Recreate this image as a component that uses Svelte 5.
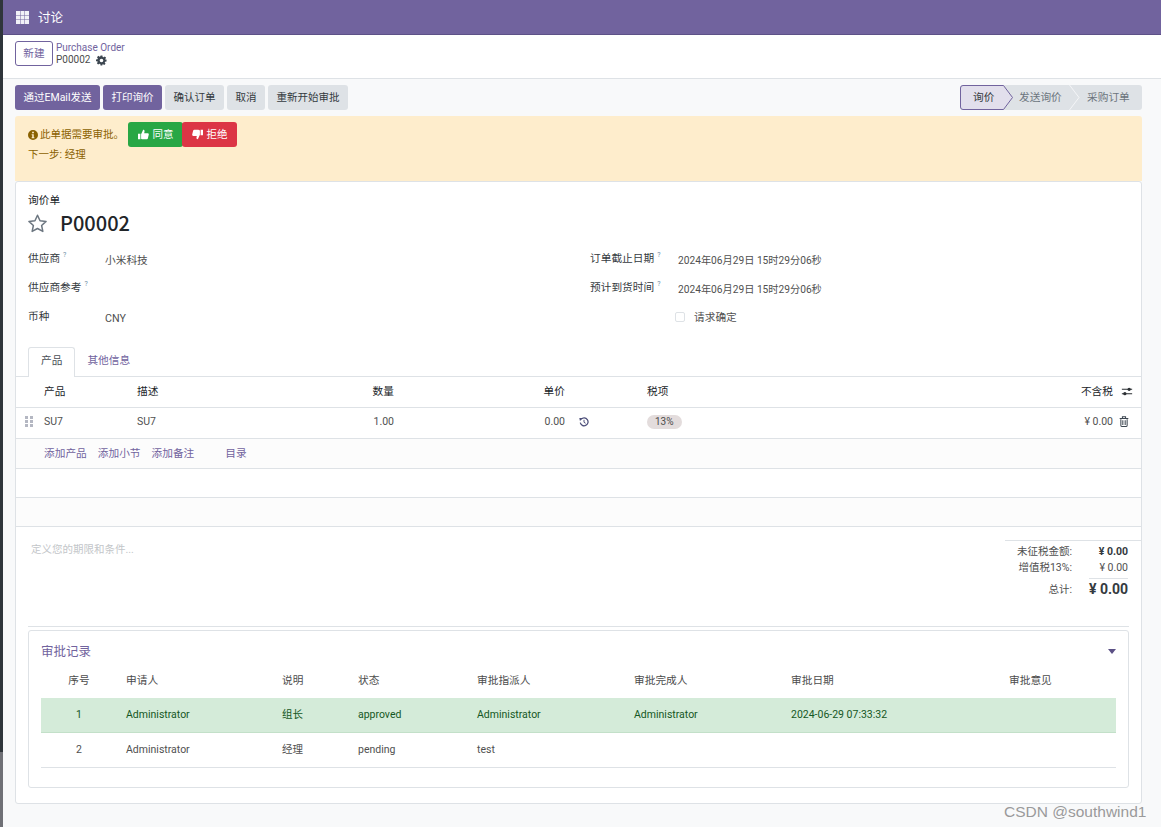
<script>
  const fieldsLeft = [
    { label: '供应商', help: true, value: '小米科技' },
    { label: '供应商参考', help: true, value: '' },
    { label: '币种', help: false, value: 'CNY' }
  ];
  const approvalHead = ['序号', '申请人', '说明', '状态', '审批指派人', '审批完成人', '审批日期', '审批意见'];
  const approvalRows = [
    { cls: 'ok', cells: ['1', 'Administrator', '组长', 'approved', 'Administrator', 'Administrator', '2024-06-29 07:33:32', ''] },
    { cls: '', cells: ['2', 'Administrator', '经理', 'pending', 'test', '', '', ''] }
  ];
</script>

<div class="page">
  <div class="strip"><div class="strip-dark"></div><div class="strip-grey"></div></div>
  <div class="main">
    <header class="nav">
      <svg class="apps" viewBox="0 0 13 13" width="13" height="13"><path fill="#f1f1f8" d="M0 0h4v4H0zM4.500 0h4v4h-4zM9 0h4v4H9zM0 4.500h4v4H0zM4.500 4.500h4v4h-4zM9 4.500h4v4H9zM0 9h4v4H0zM4.500 9h4v4h-4zM9 9h4v4H9z"/></svg>
      <span class="nav-title">讨论</span>
    </header>

    <section class="control">
      <button class="new">新建</button>
      <div class="crumb">
        <div class="crumb-top">Purchase Order</div>
        <div class="crumb-sub"><span>P00002</span>
          <svg viewBox="0 0 24 24" width="11" height="11"><path fill="#3c4650" fill-rule="evenodd" d="M10 1h4l.6 3.200 1.900.8 2.700-1.800 2.800 2.800-1.800 2.700.8 1.900L23 10v4l-3.200.6-.8 1.900 1.800 2.700-2.800 2.800-2.700-1.800-1.900.8L13.900 23h-4l-.6-3.200-1.900-.8-2.700 1.800-2.800-2.800 1.800-2.700-.8-1.900L0 13.900v-4l3.200-.6.8-1.900L2.200 4.700 5 1.900l2.700 1.800 1.900-.8zM12 8a4 4 0 1 0 0 8 4 4 0 0 0 0-8z"/></svg>
        </div>
      </div>
    </section>

    <section class="actions">
      <div class="btns">
        <button class="btn primary">通过EMail发送</button>
        <button class="btn primary">打印询价</button>
        <button class="btn grey">确认订单</button>
        <button class="btn grey">取消</button>
        <button class="btn grey">重新开始审批</button>
      </div>
      <div class="status">
        <span class="st active">询价
          <svg class="st-shape" viewBox="0 0 54 25" width="54" height="25"><path d="M3 .5H43.500L52.500 12.500 43.500 24.500H3A2.500 2.500 0 0 1 .5 22V3A2.500 2.500 0 0 1 3 .5z" fill="#e2dfec" stroke="#71639e"/></svg>
        </span>
        <span class="st second">发送询价</span>
        <span class="st third">采购订单
          <svg class="st-sep" viewBox="0 0 11 25" width="11" height="25"><path d="M.5 0l9.500 12.500L.5 25" fill="none" stroke="#f4f5f7" stroke-width="1"/></svg>
        </span>
      </div>
    </section>

    <section class="alert">
      <div class="alert-top">
        <span class="alert-msg">
          <svg viewBox="0 0 16 16" width="10" height="10"><path fill="#8a6100" fill-rule="evenodd" d="M8 0a8 8 0 1 1 0 16A8 8 0 0 1 8 0zM6.600 2.800v2.400h2.800V2.800zM5.800 6.600v1.600h1v3.200h-1V13h4.400v-1.600h-1V6.600z"/></svg>
          此单据需要审批。
        </span>
        <button class="vote yes">
          <svg viewBox="0 0 16 16" width="11" height="11"><path fill="#fff" d="M0 7h3.500v8H0zM4.500 7.500L7.500 1c1.500 0 2.300 1 2 2.500L9 6h5c1.200 0 2 1 1.700 2.100l-1.300 5.500c-.2.800-1 1.400-1.800 1.400H7c-1 0-1.700-.4-2.500-1z"/></svg>
          同意
        </button>
        <button class="vote no">
          <svg viewBox="0 0 16 16" width="11" height="11"><path fill="#fff" d="M16 9h-3.500V1H16zM11.500 8.500L8.500 15c-1.500 0-2.300-1-2-2.500L7 10H2c-1.200 0-2-1-1.700-2.100L1.600 2.400C1.800 1.600 2.600 1 3.400 1H9c1 0 1.700.4 2.500 1z"/></svg>
          拒绝
        </button>
      </div>
      <div class="alert-next">下一步: 经理</div>
    </section>

    <section class="sheet">
      <div class="head">
        <div class="doc-type">询价单</div>
        <div class="doc-title">
          <svg viewBox="0 0 24 24" width="21" height="21"><path fill="none" stroke="#6c7680" stroke-width="1.700" stroke-linejoin="round" d="M12 2.500l2.900 6.300 6.900.8-5.100 4.700 1.400 6.800-6.100-3.400-6.100 3.400 1.400-6.800-5.100-4.700 6.900-.8z"/></svg>
          <h1>P00002</h1>
        </div>
      </div>

      <div class="fields">
        <div class="col-left">
          {#each fieldsLeft as f}
            <div class="field">
              <span class="label">{f.label}{#if f.help}<sup>?</sup>{/if}</span>
              <span class="value">{f.value}</span>
            </div>
          {/each}
        </div>
        <div class="col-right">
          <div class="field r">
            <span class="label">订单截止日期<sup>?</sup></span>
            <span class="value date">2024年06月29日 15时29分06秒</span>
          </div>
          <div class="field r">
            <span class="label">预计到货时间<sup>?</sup></span>
            <span class="value date">2024年06月29日 15时29分06秒</span>
          </div>
          <div class="field r check">
            <span class="label"></span>
            <span class="value"><i class="box"></i>请求确定</span>
          </div>
        </div>
      </div>

      <nav class="tabs">
        <span class="tab on">产品</span>
        <span class="tab other">其他信息</span>
      </nav>

      <div class="lines">
        <div class="row line-head">
          <span></span><span>产品</span><span>描述</span>
          <span class="end">数量</span><span class="end">单价</span><span class="tax-col">税项</span>
          <span class="end">不含税</span>
          <svg class="ico" viewBox="0 0 14 12" width="12" height="11"><path fill="none" stroke="#2b2f33" stroke-width="1.200" d="M1 3.500h12M1 8.500h12"/><circle cx="9.500" cy="3.500" r="1.900" fill="#2b2f33"/><circle cx="4.500" cy="8.500" r="1.900" fill="#2b2f33"/></svg>
        </div>
        <div class="row line-body">
          <svg class="drag" viewBox="0 0 8 11" width="8" height="11"><path fill="#b4b7c2" d="M0 0h3v3H0zM5 0h3v3H5zM0 4h3v3H0zM5 4h3v3H5zM0 8h3v3H0zM5 8h3v3H5z"/></svg>
          <span>SU7</span><span>SU7</span>
          <span class="end">1.00</span>
          <span class="end price">0.00
            <svg class="hist" viewBox="0 0 16 16" width="10" height="10"><path fill="none" stroke="#4d4f7a" stroke-width="2" d="M3.500 3.500A6.300 6.300 0 1 1 2 9"/><path fill="#4d4f7a" d="M0.500 1.500l6 0-5 5z"/><path fill="none" stroke="#4d4f7a" stroke-width="1.600" d="M8 4.500V8.500l2.500 1.500"/></svg>
          </span>
          <span class="tax-col"><b class="pill">13%</b></span>
          <span class="end">¥ 0.00</span>
          <svg class="ico trash" viewBox="0 0 12 14" width="10" height="11"><path fill="none" stroke="#3c4650" stroke-width="1.300" d="M2 4v8.200c0 .7.400 1.100 1 1.100h6c.6 0 1-.4 1-1.100V4M.5 3.300h11M4 3V1h4v2M4.500 5.500v6M7.500 5.500v6"/></svg>
        </div>
        <div class="add-row">
          <a>添加产品</a><a>添加小节</a><a>添加备注</a><a class="catalog">目录</a>
        </div>
        <div class="blank"></div>
        <div class="blank tint"></div>
      </div>

      <div class="bottom">
        <div class="terms">定义您的期限和条件...</div>
        <div class="totals">
          <div class="t"><span>未征税金额:</span><b>¥ 0.00</b></div>
          <div class="t tax"><span>增值税13%:</span><em>¥ 0.00</em></div>
          <div class="t grand"><span>总计:</span><b>¥ 0.00</b></div>
        </div>
      </div>

      <div class="approval-wrap">
        <div class="approval">
          <div class="ap-title">
            <span>审批记录</span>
            <svg viewBox="0 0 8 5" width="8" height="5"><path fill="#5b5085" d="M0 0h8L4 5z"/></svg>
          </div>
          <table>
            <colgroup>
              <col class="c1" /><col class="c2" /><col class="c3" /><col class="c4" /><col class="c5" /><col class="c6" /><col class="c7" /><col />
            </colgroup>
            <thead>
              <tr>{#each approvalHead as h, i}<th class:center={i === 0}>{h}</th>{/each}</tr>
            </thead>
            <tbody>
              {#each approvalRows as r}
                <tr class={r.cls}>{#each r.cells as c, i}<td class:center={i === 0}>{c}</td>{/each}</tr>
              {/each}
            </tbody>
          </table>
        </div>
      </div>
    </section>
  </div>
  <div class="watermark">CSDN @southwind1</div>
</div>

<style>
  :global(body) {
    margin: 0;
    background: #f8f9fa;
  }
  .page {
    position: relative;
    display: flex;
    width: 1161px;
    height: 827px;
    overflow: hidden;
    font-family: Roboto, "Noto Sans CJK SC", sans-serif;
    font-size: 10.7px;
    line-height: 15px;
    color: #505050;
  }
  .strip { width: 3px; flex: none; display: flex; flex-direction: column; }
  .strip-dark { height: 752px; background: #2f353b; }
  .strip-grey { flex: 1; background: #6f7076; }
  .main { flex: 1; min-width: 0; display: flex; flex-direction: column; }
  button { font: inherit; cursor: pointer; }

  .nav {
    height: 34px;
    background: #71639e;
    border-bottom: 1px solid #5d5187;
    display: flex;
    align-items: center;
    padding-left: 13px;
    color: #fff;
  }
  .nav-title { font-size: 12.5px; margin-left: 9px; }

  .control {
    box-sizing: border-box;
    background: #fff;
    border-bottom: 1px solid #dee2e6;
    height: 44px;
    display: flex;
    align-items: flex-start;
    padding: 6px 0 0 12px;
    gap: 3px;
  }
  .new {
    width: 38px;
    height: 25px;
    padding: 0;
    background: #fff;
    border: 1px solid #71639e;
    border-radius: 3px;
    color: #71639e;
  }
  .crumb { line-height: 12px; padding-top: 1px; }
  .crumb-top { color: #71639e; font-size: 10px; }
  .crumb-sub { color: #4c4c4c; display: flex; align-items: center; gap: 6px; font-size: 10px; }

  .actions {
    display: flex;
    justify-content: space-between;
    padding: 6px 19px 0 12px;
    height: 25px;
    margin-bottom: 6px;
  }
  .btns { display: flex; gap: 3px; }
  .btn {
    height: 25px;
    border: 0;
    border-radius: 3px;
    padding: 0 8.5px;
    white-space: nowrap;
    font-size: 10.5px;
  }
  .primary { background: #71639e; color: #fff; }
  .grey { background: #dee2e6; color: #343a40; }

  .status {
    position: relative;
    width: 182px;
    height: 25px;
    display: flex;
    background: #dee2e6;
    border-radius: 3px;
    color: #6c757d;
    align-items: center;
  }
  .st { position: relative; }
  .active { width: 59px; padding-left: 13px; box-sizing: border-box; color: #343a40; height: 25px; line-height: 25px; z-index: 0; }
  .st-shape { position: absolute; left: 0; top: 0; z-index: -1; }
  .second { width: 68px; }
  .third { width: 55px; }
  .st-sep { position: absolute; left: -18px; top: -5px; }

  .alert {
    margin: 0 19px 0 12px;
    height: 65px;
    box-sizing: border-box;
    background: #feedcc;
    border-radius: 3px 3px 0 0;
    padding: 6px 13px;
    color: #8a6100;
    font-size: 10.5px;
  }
  .alert-top { display: flex; align-items: center; }
  .alert-msg { display: inline-flex; align-items: center; gap: 2px; width: 100px; white-space: nowrap; }
  .vote {
    height: 25px;
    border: 0;
    border-radius: 3px;
    color: #fff;
    display: inline-flex;
    align-items: center;
    justify-content: center;
    gap: 4px;
    padding: 0;
  }
  .yes { width: 55px; background: #28a745; }
  .no { width: 55px; background: #dc3545; margin-left: -1px; }
  .alert-next { margin-top: 0; }

  .sheet {
    margin: 0 19px 0 12px;
    height: 623px;
    box-sizing: border-box;
    background: #fff;
    border: 1px solid #dee2e6;
    border-radius: 3px;
    display: flex;
    flex-direction: column;
  }
  .head { padding: 11px 12px 0 11px; color: #212529; }
  .doc-type { line-height: 15px; padding-left: 1px; }
  .doc-title { display: flex; align-items: center; gap: 12px; height: 30px; }
  h1 { margin: 0; font-size: 20px; font-weight: 500; color: #212529; font-family: "Noto Sans CJK SC", Roboto, sans-serif; line-height: 30px; }

  .fields { display: flex; padding: 13px 12px 0; height: 106px; box-sizing: border-box; }
  .col-left { width: 562px; }
  .col-right { flex: 1; }
  .field { display: flex; height: 29px; align-items: flex-start; }
  .label { width: 77px; color: #343a40; flex: none; white-space: nowrap; }
  .r .label { width: 88px; }
  .r.check .label { width: 85px; }
  .value { padding-top: 2px; color: #505050; }
  .date { font-size: 10.2px; }
  .check .value { padding-top: 1px; }
  sup { font-size: 7px; color: #6c8ea5; margin-left: 3px; line-height: 0; vertical-align: 5px; }
  .box {
    display: inline-block;
    width: 8px;
    height: 8px;
    border: 1px solid #dee2e6;
    border-radius: 2px;
    margin-right: 9px;
    vertical-align: -1px;
  }

  .tabs { display: flex; padding-left: 12px; margin-top: 3px; border-bottom: 1px solid #dee2e6; height: 29px; }
  .tab { padding: 5px 12px 0; color: #71639e; border: 1px solid transparent; border-bottom: 0; }
  .tab.other { margin-left: -1px; }
  .tab.on { color: #495057; background: #fff; border-color: #dee2e6; border-radius: 3px 3px 0 0; height: 30px; box-sizing: border-box; }

  .row {
    display: grid;
    grid-template-columns: 28px 93px 200px 57px 171px 182px 1fr 28px;
    align-items: center;
    border-bottom: 1px solid #dee2e6;
    box-sizing: content-box;
  }
  .line-head { height: 29px; padding-bottom: 1px; color: #212529; }
  .line-body { height: 27px; padding-bottom: 3px; font-size: 10.5px; }
  .end { text-align: right; }
  .tax-col { padding-left: 82px; }
  .price { position: relative; }
  .hist { position: absolute; left: 100%; top: 3px; margin-left: 14px; }
  .drag { margin-left: 9px; }
  .ico { justify-self: center; }
  .trash { position: relative; left: -3px; }
  .pill {
    display: inline-block;
    font-weight: 400;
    background: #e3dcdc;
    color: #4c4c4c;
    border-radius: 8px;
    height: 14px;
    line-height: 14px;
    padding: 0 8px;
    font-size: 10px;
  }
  .add-row {
    height: 29px;
    display: flex;
    align-items: center;
    gap: 11px;
    padding-left: 28px;
    background: #fcfcfc;
    border-bottom: 1px solid #dee2e6;
    color: #71639e;
  }
  .catalog { margin-left: 20px; }
  .blank { height: 28px; border-bottom: 1px solid #dee2e6; }
  .tint { background: #fcfcfc; }

  .bottom { display: flex; justify-content: space-between; height: 99px; }
  .terms { padding: 15px 0 0 15px; color: #c3c6c9; font-size: 10.5px; }
  .totals { width: 136px; margin-top: 13px; border-top: 1px solid #dee2e6; padding: 2px 13px 0 0; height: fit-content; box-sizing: border-box; font-size: 10.5px; }
  .t { display: grid; grid-template-columns: 67px 1fr; justify-items: end; line-height: 17px; }
  .t b { font-weight: 700; color: #343a40; }
  .t em { font-style: normal; }
  .t.tax { line-height: 15px; }
  .t.grand { align-items: center; margin-top: 3px; }
  .t.grand b { font-size: 14px; border-top: 1px solid #dee2e6; width: 39px; box-sizing: border-box; text-align: right; line-height: 21px; white-space: nowrap; }

  .approval-wrap { margin: 0 12px; border-top: 1px solid #dee2e6; padding-top: 3px; }
  .approval { border: 1px solid #dee2e6; border-radius: 3px; height: 158px; box-sizing: border-box; padding: 0 12px; }
  .ap-title { display: flex; justify-content: space-between; align-items: center; height: 40px; color: #71639e; font-size: 12.5px; }
  table { border-collapse: collapse; table-layout: fixed; width: 1075px; }
  .c1 { width: 85px; }
  .c2 { width: 156px; }
  .c3 { width: 76px; }
  .c4 { width: 119px; }
  .c5 { width: 157px; }
  .c6 { width: 157px; }
  .c7 { width: 218px; }
  th { font-weight: 400; text-align: left; height: 27px; padding: 2px 0 0; vertical-align: top; color: #4c4c4c; box-sizing: border-box; }
  td { padding: 0 0 2px; border-bottom: 1px solid #dee2e6; font-size: 10.5px; box-sizing: content-box; height: 32px; }
  th.center, td.center { text-align: center; padding-right: 9px; }
  tr.ok td { background: #d4ebd9; color: #155724; border-bottom-color: #c3e0c9; }

  .watermark {
    position: absolute;
    left: 1004px;
    top: 803px;
    font-family: "Liberation Sans", Arial, sans-serif;
    font-size: 15.5px;
    line-height: 17px;
    color: #9a9a9a;
    white-space: nowrap;
  }
</style>
